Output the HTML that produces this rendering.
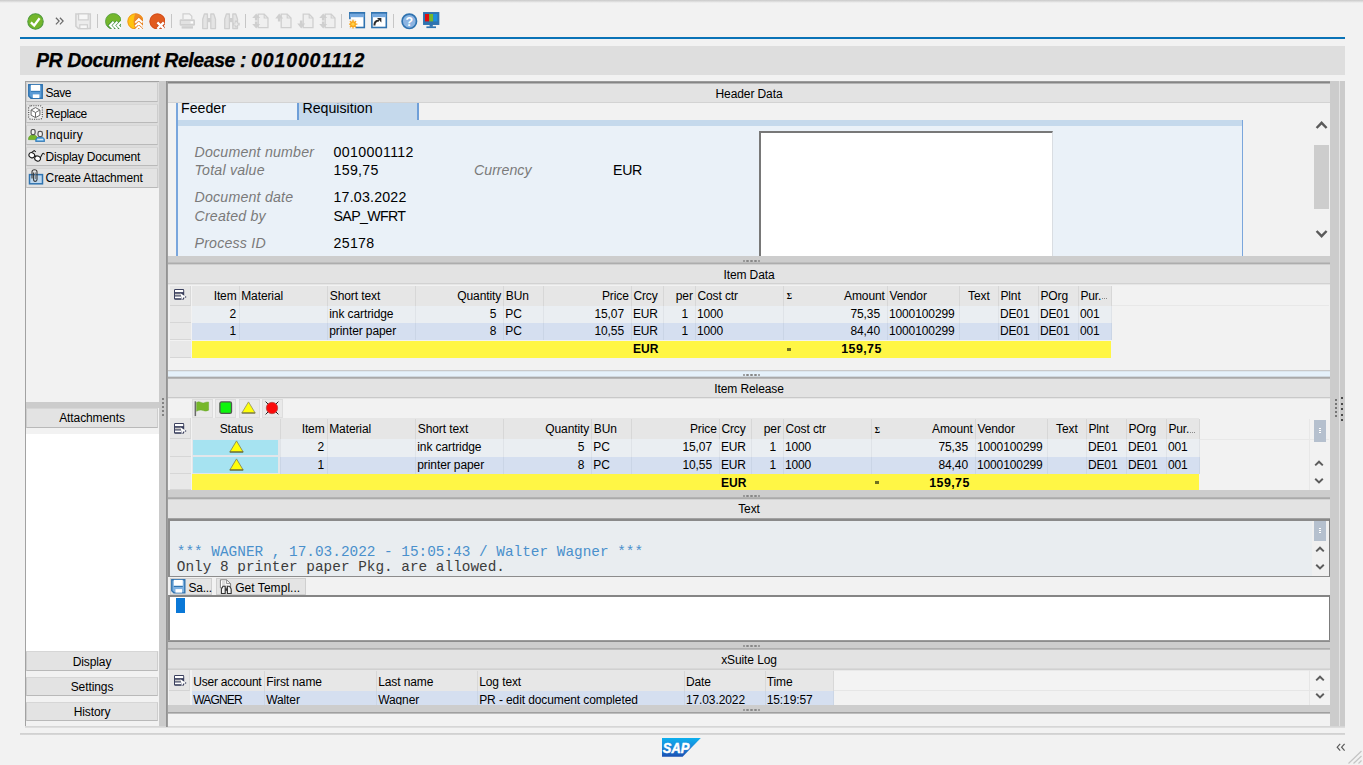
<!DOCTYPE html>
<html lang="en"><head><meta charset="utf-8"><title>PR Document Release : 0010001112</title>
<style>
html,body{margin:0;padding:0;}
body{width:1363px;height:765px;overflow:hidden;background:#f2f2f2;position:relative;
 font-family:"Liberation Sans","DejaVu Sans",sans-serif;font-size:12px;color:#000;}
div,span,svg{position:absolute;box-sizing:border-box;}
.t{white-space:nowrap;line-height:14px;font-size:12px;letter-spacing:-0.1px;}
.h{white-space:nowrap;line-height:16px;font-size:14.2px;}
.hl{white-space:nowrap;line-height:16px;font-size:14.2px;font-style:italic;color:#7a7a7a;}
.m{white-space:pre;line-height:16px;font-size:14.4px;font-family:"Liberation Mono","DejaVu Sans Mono",monospace;}
.b{font-weight:bold;}
</style></head><body>
<div style="left:0px;top:0px;width:1363px;height:3px;background:linear-gradient(#c9c9c9,#f2f2f2);"></div>
<svg style="left:27.2px;top:12.6px" width="17" height="17" viewBox="0 0 17 17"><circle cx="8.5" cy="8.5" r="7.7" fill="#74b62c" stroke="#4f9b3c" stroke-width="1.1"/><path d="M3.9 9.3 L7.2 12.5 L12.6 5.3" fill="none" stroke="#fff" stroke-width="2.3"/></svg>
<svg style="left:55.4px;top:17px" width="9" height="8.4" viewBox="0 0 9 8.4"><path d="M0.9 0.8 L4.1 4.1 L0.9 7.4 M4.9 0.8 L8.1 4.1 L4.9 7.4" fill="none" stroke="#6a6a6a" stroke-width="1.25"/></svg>
<svg style="left:75px;top:13px" width="17" height="17" viewBox="0 0 17 17"><path d="M0.9 0.9 H15.3 V15.6 H3.4 L0.9 13.2 Z" fill="#ececec" stroke="#cfcfcf" stroke-width="1.5"/><rect x="3.6" y="0.9" width="9.6" height="6" fill="#f7f7f7" stroke="#cfcfcf" stroke-width="1.2"/><rect x="4.8" y="11.8" width="7.6" height="3.8" fill="#f7f7f7" stroke="#cfcfcf" stroke-width="1.2"/></svg>
<div style="left:97px;top:14px;width:1px;height:14px;background:#c6c6c6"></div>
<div style="left:171px;top:14px;width:1px;height:14px;background:#c6c6c6"></div>
<div style="left:245px;top:14px;width:1px;height:14px;background:#c6c6c6"></div>
<div style="left:341px;top:14px;width:1px;height:14px;background:#c6c6c6"></div>
<div style="left:393px;top:14px;width:1px;height:14px;background:#c6c6c6"></div>
<svg style="left:104.5px;top:12.8px" width="16.4" height="16.4" viewBox="0 0 16.4 16.4"><circle cx="8.4" cy="8.4" r="7.9" fill="#74b62c" stroke="#4f9b3c" stroke-width="0.8"/><path d="M8.6 8.8 L5 12.4 L8.6 16 M12.4 8.8 L8.8 12.4 L12.4 16 M16.2 8.8 L12.6 12.4 L16.2 16" fill="none" stroke="#3d8a3a" stroke-width="3.6"/><path d="M8.6 8.8 L5 12.4 L8.6 16 M12.4 8.8 L8.8 12.4 L12.4 16 M16.2 8.8 L12.6 12.4 L16.2 16" fill="none" stroke="#fff" stroke-width="2.1"/></svg>
<svg style="left:126.6px;top:12.8px" width="16.4" height="16.4" viewBox="0 0 16.4 16.4"><circle cx="8.4" cy="8.4" r="7.9" fill="#ffc30f"/><path d="M8.4 0.5 A7.9 7.9 0 0 1 16.3 8.4 A7.9 7.9 0 0 1 8.4 16.3 Q4.8 8.4 8.4 0.5 Z" fill="#f08c26"/><circle cx="8.4" cy="8.4" r="7.6" fill="none" stroke="#ef8a24" stroke-width="0.8"/><path d="M8.2 9.6 L11.8 6 L15.4 9.6 M8.2 13.4 L11.8 9.8 L15.4 13.4 M8.2 17.2 L11.8 13.6 L15.4 17.2" fill="none" stroke="#e27b1e" stroke-width="3.4"/><path d="M8.2 9.6 L11.8 6 L15.4 9.6 M8.2 13.4 L11.8 9.8 L15.4 13.4 M8.2 17.2 L11.8 13.6 L15.4 17.2" fill="none" stroke="#fff" stroke-width="1.9"/></svg>
<svg style="left:148.6px;top:12.8px" width="16.4" height="16.4" viewBox="0 0 16.4 16.4"><circle cx="8.4" cy="8.4" r="7.9" fill="#e15b1f"/><circle cx="8.4" cy="8.4" r="7.5" fill="none" stroke="#cf4a1a" stroke-width="0.8"/><path d="M8.4 9.4 L14.8 15.8 M14.8 9.4 L8.4 15.8" fill="none" stroke="#c9471a" stroke-width="3.8"/><path d="M8.4 9.4 L14.8 15.8 M14.8 9.4 L8.4 15.8" fill="none" stroke="#fff" stroke-width="2.4"/></svg>
<svg style="left:179px;top:12.6px" width="17" height="17" viewBox="0 0 17 17"><path d="M4 6 V0.8 H10.4 L12.8 3.2 V6" fill="#f4f4f4" stroke="#cfcfcf" stroke-width="1.2"/><rect x="0.6" y="6.2" width="15.4" height="6.6" rx="1.4" fill="#cfcfcf"/><rect x="2" y="8" width="12.6" height="3" fill="#e2e2e2"/><rect x="2.6" y="13.2" width="11.4" height="2.4" fill="#cfcfcf"/><rect x="11.6" y="8.4" width="2.4" height="2" fill="#fff"/></svg>
<svg style="left:201.6px;top:12.6px" width="17" height="17" viewBox="0 0 17 17"><path d="M0.7 15.6 V6.2 L2.4 1 H5.4 V15.6 Z M8.8 15.6 V1 H11.8 L13.5 6.2 V15.6 Z" fill="#e4e4e4" stroke="#cfcfcf" stroke-width="1.3" stroke-linejoin="round"/><rect x="5.4" y="5" width="3.4" height="4.2" fill="#cfcfcf"/></svg>
<svg style="left:224px;top:12.6px" width="17" height="17" viewBox="0 0 17 17"><path d="M0.7 15.6 V6.2 L2.4 1 H5.4 V15.6 Z M8.8 15.6 V1 H11.8 L13.5 6.2 V15.6 Z" fill="#e4e4e4" stroke="#cfcfcf" stroke-width="1.3" stroke-linejoin="round"/><rect x="5.4" y="5" width="3.4" height="4.2" fill="#cfcfcf"/><path d="M12.2 7.6 V14.6 M8.7 11.1 H15.7" stroke="#cfcfcf" stroke-width="2.6"/><path d="M12.2 9 V13.2 M10.1 11.1 H14.3" stroke="#f0f0f0" stroke-width="0.9"/></svg>
<svg style="left:252.3px;top:12.6px" width="17" height="17" viewBox="0 0 17 17"><path d="M6.2 1.2 H12.2 L16 5 V14.6 H6.2 Z" fill="#efefef" stroke="#cfcfcf" stroke-width="1.3"/><path d="M12.2 1.2 V5 H16" fill="none" stroke="#cfcfcf" stroke-width="1.1"/><path d="M4.2 0.4 L0.2 5 H2.9 V7.6 H5.5 V5 H8.2 Z" fill="#cfcfcf"/><path d="M4.2 15.6 L0.2 11 H2.9 V8.4 H5.5 V11 H8.2 Z" fill="#cfcfcf"/></svg>
<svg style="left:274.6px;top:12.6px" width="17" height="17" viewBox="0 0 17 17"><path d="M6.2 1.2 H12.2 L16 5 V14.6 H6.2 Z" fill="#efefef" stroke="#cfcfcf" stroke-width="1.3"/><path d="M12.2 1.2 V5 H16" fill="none" stroke="#cfcfcf" stroke-width="1.1"/><path d="M4.2 0.4 L0.2 5.4 H2.9 V8.6 H5.5 V5.4 H8.2 Z" fill="#cfcfcf"/></svg>
<svg style="left:296.6px;top:12.6px" width="17" height="17" viewBox="0 0 17 17"><path d="M6.2 1.2 H12.2 L16 5 V14.6 H6.2 Z" fill="#efefef" stroke="#cfcfcf" stroke-width="1.3"/><path d="M12.2 1.2 V5 H16" fill="none" stroke="#cfcfcf" stroke-width="1.1"/><path d="M4.2 15.6 L0.2 10.6 H2.9 V7.4 H5.5 V10.6 H8.2 Z" fill="#cfcfcf"/></svg>
<svg style="left:318.6px;top:12.6px" width="17" height="17" viewBox="0 0 17 17"><path d="M6.2 1.2 H12.2 L16 5 V14.6 H6.2 Z" fill="#efefef" stroke="#cfcfcf" stroke-width="1.3"/><path d="M12.2 1.2 V5 H16" fill="none" stroke="#cfcfcf" stroke-width="1.1"/><path d="M4.2 0.4 L0.2 5 H2.9 V7.6 H5.5 V5 H8.2 Z" fill="#cfcfcf"/><path d="M4.2 15.6 L0.2 11 H2.9 V8.4 H5.5 V11 H8.2 Z" fill="#cfcfcf"/></svg>
<svg style="left:348.6px;top:12.4px" width="17" height="17" viewBox="0 0 17 17"><rect x="0.9" y="0.9" width="14.4" height="14.6" fill="#fff" stroke="#2f73b0" stroke-width="1.6"/><rect x="1" y="1.4" width="14.2" height="3.8" fill="#74a8de"/><rect x="0.1" y="0.1" width="16" height="1.5" fill="#2f73b0"/><rect x="0" y="7.2" width="6.6" height="9.6" fill="#f2f2f2"/><circle cx="4" cy="12.2" r="2.9" fill="#f9a51a"/><path d="M4 7.8 V16.6 M-0.4 12.2 H8.4 M0.9 9.1 L7.1 15.3 M7.1 9.1 L0.9 15.3" stroke="#f9a51a" stroke-width="1.3"/><circle cx="4" cy="12.2" r="1.6" fill="#ffd24a"/></svg>
<svg style="left:370.8px;top:12.4px" width="17" height="17" viewBox="0 0 17 17"><rect x="0.9" y="0.9" width="14.4" height="14.6" fill="#fff" stroke="#2f73b0" stroke-width="1.6"/><rect x="1" y="1.4" width="14.2" height="3.8" fill="#74a8de"/><rect x="0.1" y="0.1" width="16" height="1.5" fill="#2f73b0"/><path d="M3.4 13.6 Q3.4 8.6 8 8.6" fill="none" stroke="#2a2a2a" stroke-width="2"/><path d="M6 6 H10.4 V10.4 Z" fill="#2a2a2a"/></svg>
<svg style="left:400.6px;top:13px" width="17" height="17" viewBox="0 0 17 17"><circle cx="8.3" cy="8.3" r="7.2" fill="#8cb4e1" stroke="#2f73b0" stroke-width="1.7"/><text x="8.3" y="12.7" font-family="Liberation Sans,sans-serif" font-size="12.5" font-weight="bold" fill="#fff" text-anchor="middle">?</text></svg>
<svg style="left:422.8px;top:12.4px" width="17" height="17" viewBox="0 0 17 17"><rect x="0.8" y="0.8" width="14.8" height="11.4" fill="#2f73b0" stroke="#2f73b0" stroke-width="1.5"/><rect x="2" y="2" width="4.2" height="7.4" fill="#e00d0d"/><rect x="6.2" y="2" width="4.1" height="7.4" fill="#76b72a"/><rect x="10.3" y="2" width="4.1" height="7.4" fill="#1c8fdc"/><rect x="6.6" y="12.2" width="3.2" height="2.6" fill="#2f73b0"/><rect x="3.4" y="14.4" width="9.6" height="1.7" fill="#2f73b0"/></svg>
<div style="left:20px;top:37px;width:1325px;height:2px;background:#0a73b7;"></div>
<div style="left:20px;top:46px;width:1325px;height:29px;background:#dedede;"></div>
<span class="t" style="left:36px;top:48px;font-size:19.5px;line-height:24px;font-weight:bold;font-style:italic;-webkit-text-stroke:0.25px #000;"><span style="position:static;letter-spacing:-0.42px">PR Document Release : </span><span style="position:static;letter-spacing:0.86px">0010001112</span></span>
<div style="left:25px;top:81px;width:134px;height:646px;background:#f2f2f2;border-left:1px solid #a2a2a2;border-top:1px solid #a2a2a2;border-bottom:1px solid #d4d4d4;"></div>
<div style="left:26px;top:82px;width:133px;height:106px;background:#dcdcdc;"></div>
<div style="left:26px;top:82px;width:132px;height:19.5px;background:#e3e3e3;border:1px solid #cdcdcd;border-bottom-color:#b9b9b9;border-top-color:#d6d6d6;"></div>
<span class="t" style="left:45.6px;top:85.8px;letter-spacing:-0.5px;">Save</span>
<div style="left:26px;top:103.5px;width:132px;height:19.5px;background:#e3e3e3;border:1px solid #cdcdcd;border-bottom-color:#b9b9b9;border-top-color:#d6d6d6;"></div>
<span class="t" style="left:45.6px;top:106.5px;letter-spacing:-0.4px;">Replace</span>
<div style="left:26px;top:125px;width:132px;height:19.5px;background:#e3e3e3;border:1px solid #cdcdcd;border-bottom-color:#b9b9b9;border-top-color:#d6d6d6;"></div>
<span class="t" style="left:45.6px;top:128px;letter-spacing:0.2px;">Inquiry</span>
<div style="left:26px;top:146.5px;width:132px;height:19.5px;background:#e3e3e3;border:1px solid #cdcdcd;border-bottom-color:#b9b9b9;border-top-color:#d6d6d6;"></div>
<span class="t" style="left:45.6px;top:149.5px;letter-spacing:-0.18px;">Display Document</span>
<div style="left:26px;top:168px;width:132px;height:19.5px;background:#e3e3e3;border:1px solid #cdcdcd;border-bottom-color:#b9b9b9;border-top-color:#d6d6d6;"></div>
<span class="t" style="left:45.6px;top:171px;letter-spacing:-0.13px;">Create Attachment</span>
<svg style="left:28px;top:84px" width="15" height="15" viewBox="0 0 15 15"><path d="M0.8 0.8 H14.2 V14.2 H3 L0.8 12 Z" fill="#5b9bd5" stroke="#2f73b0" stroke-width="1.5" stroke-linejoin="miter"/><rect x="2.9" y="0.9" width="9.2" height="6" fill="#fff"/><path d="M2.9 7.4 H12.1" stroke="#2f73b0" stroke-width="0.9"/><rect x="4.8" y="10.4" width="6.6" height="3.6" fill="#fff"/></svg>
<svg style="left:28px;top:105px" width="15" height="15" viewBox="0 0 15 15"><rect x="0.7" y="0.7" width="13.6" height="13.6" rx="2.4" fill="#f0f0f0" stroke="#444" stroke-width="1.1" stroke-dasharray="1 1.25"/><path d="M7.5 2.6 L11.9 5 V10.2 L7.5 12.6 L3.1 10.2 V5 Z" fill="#fff" stroke="#6a6a6a" stroke-width="1"/><path d="M3.1 5 L7.5 7.5 L11.9 5 M7.5 7.5 V12.6" fill="none" stroke="#6a6a6a" stroke-width="1"/></svg>
<svg style="left:27.6px;top:128.6px" width="17.4" height="13" viewBox="0 0 17.4 13"><path d="M0.5 10.6 Q0.5 6 5 6 Q9.4 6 9.4 10.6 Z" fill="#76b72a" stroke="#5a9c2a" stroke-width="0.7"/><rect x="3.1" y="0.5" width="4" height="5.2" rx="1.7" fill="#f4f4f4" stroke="#555" stroke-width="1.2"/><path d="M7.6 12.5 Q7.6 7.8 12.2 7.8 Q16.8 7.8 16.8 12.5 Z" fill="#4d9fdc" stroke="#2f73b0" stroke-width="0.8"/><rect x="9.2" y="9.8" width="6" height="1.5" fill="#d6e8f7"/><rect x="10" y="2.4" width="4.4" height="5.2" rx="1.8" fill="#f4f4f4" stroke="#555" stroke-width="1.2"/></svg>
<svg style="left:27.6px;top:150px" width="17.4" height="12" viewBox="0 0 17.4 12"><ellipse cx="3.8" cy="5.2" rx="2.9" ry="2.5" transform="rotate(25 3.8 5.2)" fill="#fff" stroke="#1a1a1a" stroke-width="1.1"/><ellipse cx="9.6" cy="8.6" rx="2.9" ry="2.5" transform="rotate(25 9.6 8.6)" fill="#fff" stroke="#1a1a1a" stroke-width="1.1"/><path d="M6.4 5.8 Q7.6 5.4 7.4 7 M12.2 8 L14.6 3.6 Q15.6 2.8 16.6 4.4 M3.4 2.6 L6.2 0.6 L7.8 1.8" fill="none" stroke="#1a1a1a" stroke-width="1.05"/></svg>
<svg style="left:28px;top:169px" width="16" height="16" viewBox="0 0 16 16"><rect x="1.5" y="5.6" width="13" height="9.2" fill="#bdd7ee" stroke="#2f73b0" stroke-width="1.5"/><path d="M4 9.6 V2.8 Q4 0.8 6.5 0.8 Q9 0.8 9 2.8 V10.6 Q9 12.4 7.2 12.4 Q5.6 12.4 5.6 10.6 V3.6" fill="none" stroke="#3a3a3a" stroke-width="1.1"/><path d="M7.4 3.4 V10" fill="none" stroke="#777" stroke-width="0.9"/></svg>
<div style="left:26px;top:401.5px;width:133px;height:6px;background:#cccccc;"></div>
<div style="left:26px;top:407.5px;width:132px;height:20px;background:#e3e3e3;border:1px solid #cdcdcd;border-bottom-color:#b9b9b9;border-top-color:#d6d6d6;"></div>
<span class="t" style="left:25px;top:410.5px;width:134px;text-align:center;">Attachments</span>
<div style="left:26px;top:434px;width:133px;height:217px;background:#fff;"></div>
<div style="left:26px;top:651px;width:132px;height:19.5px;background:#e3e3e3;border:1px solid #cdcdcd;border-bottom-color:#b9b9b9;border-top-color:#d6d6d6;"></div>
<span class="t" style="left:25px;top:654.5px;width:134px;text-align:center;">Display</span>
<div style="left:26px;top:676.5px;width:132px;height:19.5px;background:#e3e3e3;border:1px solid #cdcdcd;border-bottom-color:#b9b9b9;border-top-color:#d6d6d6;"></div>
<span class="t" style="left:25px;top:680.0px;width:134px;text-align:center;">Settings</span>
<div style="left:26px;top:701.5px;width:132px;height:19.5px;background:#e3e3e3;border:1px solid #cdcdcd;border-bottom-color:#b9b9b9;border-top-color:#d6d6d6;"></div>
<span class="t" style="left:25px;top:705.0px;width:134px;text-align:center;">History</span>
<div style="left:159px;top:81px;width:7px;height:646px;background:#cbcbcb;"></div>
<div style="left:162px;top:398.0px;width:2px;height:2px;background:#6a6a6a;border-radius:1px;"></div>
<div style="left:162px;top:402.1px;width:2px;height:2px;background:#6a6a6a;border-radius:1px;"></div>
<div style="left:162px;top:406.2px;width:2px;height:2px;background:#6a6a6a;border-radius:1px;"></div>
<div style="left:162px;top:410.3px;width:2px;height:2px;background:#6a6a6a;border-radius:1px;"></div>
<div style="left:162px;top:414.4px;width:2px;height:2px;background:#6a6a6a;border-radius:1px;"></div>
<div style="left:1330px;top:81px;width:9px;height:646px;background:#cccccc;"></div>
<div style="left:1339px;top:81px;width:1px;height:646px;background:#e2e2e2;"></div>
<div style="left:1340px;top:81px;width:5px;height:646px;background:#cbcbcb;"></div>
<div style="left:1335px;top:398.5px;width:2px;height:2px;background:#5a5a5a;border-radius:1px;"></div>
<div style="left:1341px;top:397.2px;width:2px;height:2px;background:#4a4a4a;"></div>
<div style="left:1335px;top:402.6px;width:2px;height:2px;background:#5a5a5a;border-radius:1px;"></div>
<div style="left:1341px;top:402.7px;width:2px;height:2px;background:#4a4a4a;"></div>
<div style="left:1335px;top:406.7px;width:2px;height:2px;background:#5a5a5a;border-radius:1px;"></div>
<div style="left:1341px;top:408.2px;width:2px;height:2px;background:#4a4a4a;"></div>
<div style="left:1335px;top:410.8px;width:2px;height:2px;background:#5a5a5a;border-radius:1px;"></div>
<div style="left:1341px;top:413.7px;width:2px;height:2px;background:#4a4a4a;"></div>
<div style="left:1335px;top:414.9px;width:2px;height:2px;background:#5a5a5a;border-radius:1px;"></div>
<div style="left:1341px;top:419.2px;width:2px;height:2px;background:#4a4a4a;"></div>
<div style="left:166px;top:81px;width:1164px;height:1px;background:#9a9a9a;"></div>
<div style="left:166px;top:82px;width:1164px;height:1px;background:#858585;"></div>
<div style="left:166px;top:83px;width:1164px;height:1px;background:#b4b4b4;"></div>
<div style="left:167px;top:84px;width:1163px;height:18px;background:#e3e3e3;"></div>
<span class="t" style="left:167px;top:86.7px;width:1164px;text-align:center;">Header Data</span>
<div style="left:176px;top:103px;width:1067px;height:23px;background:#c5d9ec;"></div>
<div style="left:178px;top:103px;width:119px;height:17px;background:#eaf1f8;"></div>
<div style="left:419px;top:103px;width:824px;height:17px;background:#f2f2f2;"></div>
<div style="left:178px;top:126px;width:1064px;height:130px;background:#eaf1f8;"></div>
<div style="left:176px;top:103px;width:2px;height:153px;background:#7aa6dc;"></div>
<div style="left:297px;top:103px;width:1.5px;height:17px;background:#6f9fd8;"></div>
<div style="left:417.4px;top:103px;width:1.6px;height:17px;background:#6f9fd8;"></div>
<div style="left:1241.5px;top:120px;width:1.5px;height:136px;background:#7aa6dc;"></div>
<span class="h" style="left:181px;top:100px;">Feeder</span>
<span class="h" style="left:302.4px;top:100px;">Requisition</span>
<div style="left:166px;top:102px;width:1164px;height:1px;background:#d3d3d3;"></div>
<span class="hl" style="left:194.5px;top:143.5px;letter-spacing:0.2px;">Document number</span>
<span class="h" style="left:333.5px;top:143.5px;letter-spacing:0.35px;">0010001112</span>
<span class="hl" style="left:194.5px;top:161.5px;letter-spacing:0.2px;">Total value</span>
<span class="h" style="left:333.5px;top:161.5px;letter-spacing:0.3px;">159,75</span>
<span class="hl" style="left:194.5px;top:189.1px;letter-spacing:0.2px;">Document date</span>
<span class="h" style="left:333.5px;top:189.1px;letter-spacing:0.2px;">17.03.2022</span>
<span class="hl" style="left:194.5px;top:207.7px;letter-spacing:0.2px;">Created by</span>
<span class="h" style="left:333.5px;top:207.7px;letter-spacing:-0.65px;">SAP_WFRT</span>
<span class="hl" style="left:194.5px;top:234.7px;letter-spacing:0.2px;">Process ID</span>
<span class="h" style="left:333.5px;top:234.7px;letter-spacing:0.3px;">25178</span>
<span class="hl" style="left:474px;top:161.5px;">Currency</span>
<span class="h" style="left:613px;top:161.5px;letter-spacing:-0.3px;">EUR</span>
<div style="left:759px;top:130.5px;width:294px;height:125.5px;background:#fff;border-top:2px solid #787878;border-left:2px solid #787878;border-right:1px solid #d9dde2;"></div>
<div style="left:1314.2px;top:145.2px;width:14.8px;height:63.6px;background:#cdcdcd;"></div>
<svg style="left:1314px;top:120px" width="15" height="10" viewBox="0 0 15 10"><path d="M2.6 8 L7.6 2.8 L12.6 8" fill="none" stroke="#5a5a5a" stroke-width="2.4"/></svg>
<svg style="left:1314px;top:229px" width="15" height="10" viewBox="0 0 15 10"><path d="M2.6 2 L7.6 7.2 L12.6 2" fill="none" stroke="#5a5a5a" stroke-width="2.4"/></svg>
<div style="left:166px;top:256px;width:1164px;height:1px;background:#cdcdcd;"></div>
<div style="left:166px;top:257px;width:1164px;height:1px;background:#cdcdcd;"></div>
<div style="left:166px;top:258px;width:1164px;height:1px;background:#cdcdcd;"></div>
<div style="left:166px;top:259px;width:1164px;height:1px;background:#cdcdcd;"></div>
<div style="left:166px;top:260px;width:1164px;height:1px;background:#cdcdcd;"></div>
<div style="left:166px;top:261px;width:1164px;height:1px;background:#cdcdcd;"></div>
<div style="left:166px;top:262px;width:1164px;height:1px;background:#bdbdbd;"></div>
<div style="left:166px;top:263px;width:1164px;height:1px;background:#adadad;"></div>
<div style="left:166px;top:264px;width:1164px;height:1px;background:#cfcfcf;"></div>
<div style="left:742.5px;top:259.5px;width:2.2px;height:2.2px;background:#888888;border-radius:1.1px;"></div>
<div style="left:746.45px;top:259.5px;width:2.2px;height:2.2px;background:#888888;border-radius:1.1px;"></div>
<div style="left:750.4px;top:259.5px;width:2.2px;height:2.2px;background:#888888;border-radius:1.1px;"></div>
<div style="left:754.35px;top:259.5px;width:2.2px;height:2.2px;background:#888888;border-radius:1.1px;"></div>
<div style="left:758.3px;top:259.5px;width:2.2px;height:2.2px;background:#888888;border-radius:1.1px;"></div>
<div style="left:167px;top:265px;width:1163px;height:18px;background:#e3e3e3;"></div>
<span class="t" style="left:167px;top:267.5px;width:1164px;text-align:center;">Item Data</span>
<div style="left:166px;top:283px;width:1164px;height:1px;background:#d2d2d2;"></div>
<div style="left:166px;top:284px;width:1164px;height:1px;background:#e6e6e6;"></div>
<div style="left:169.5px;top:285.6px;width:21.3px;height:20.099999999999966px;background:#e6e6e6;border-bottom:1px solid #d3d3d3;border-right:1px solid #d9d9d9;"></div>
<svg style="left:174.1px;top:289.4px" width="13" height="12" viewBox="0 0 13 12"><rect x="0.6" y="0.6" width="9" height="9.6" rx="0.8" fill="#3b405e" stroke="#3b405e" stroke-width="1.2"/><rect x="1" y="1" width="8.2" height="2.1" fill="#fff"/><rect x="1" y="4.7" width="6" height="1.7" fill="#c9c9c9"/><rect x="1" y="7.5" width="6" height="1.7" fill="#fff"/><path d="M6.6 4.2 L12 8 L9.3 8.6 L7.8 11.4 Z" fill="#fff"/><circle cx="11.6" cy="8" r="0.7" fill="#3b405e"/></svg>
<div style="left:169.5px;top:305.7px;width:21.3px;height:17.100000000000023px;background:#e8e8e8;border-bottom:1px solid #d6d6d6;"></div>
<div style="left:169.5px;top:322.8px;width:21.3px;height:17.69999999999999px;background:#e8e8e8;border-bottom:1px solid #d6d6d6;"></div>
<div style="left:169.5px;top:340.5px;width:21.3px;height:17.0px;background:#e8e8e8;border-bottom:1px solid #d6d6d6;"></div>
<div style="left:1111.4px;top:305.3px;width:217.5999999999999px;height:1px;background:#e8e8e8;"></div>
<div style="left:192.4px;top:285.6px;width:919.0000000000001px;height:20.099999999999966px;background:#e6e6e6;"></div>
<div style="left:192.4px;top:305.7px;width:919.0000000000001px;height:17.100000000000023px;background:#eaeef2;"></div>
<div style="left:192.4px;top:322.8px;width:919.0000000000001px;height:17.69999999999999px;background:#d5dff0;"></div>
<div style="left:192.4px;top:340.5px;width:919.0000000000001px;height:17.0px;background:#fff645;"></div>
<div style="left:238.7px;top:286.1px;width:1px;height:19.599999999999966px;background:#d7d7d7;"></div>
<div style="left:238.7px;top:305.7px;width:1px;height:17.100000000000023px;background:#dfe3e8;"></div>
<div style="left:238.7px;top:322.8px;width:1px;height:17.69999999999999px;background:#cad5e6;"></div>
<span class="t" style="right:1126.4px;top:288.7px;letter-spacing:-0.1px;">Item</span>
<span class="t" style="right:1127.0px;top:306.75px;letter-spacing:-0.1px;">2</span>
<span class="t" style="right:1127.0px;top:323.85px;letter-spacing:-0.1px;">1</span>
<div style="left:327.29999999999995px;top:286.1px;width:1px;height:19.599999999999966px;background:#d7d7d7;"></div>
<div style="left:327.29999999999995px;top:305.7px;width:1px;height:17.100000000000023px;background:#dfe3e8;"></div>
<div style="left:327.29999999999995px;top:322.8px;width:1px;height:17.69999999999999px;background:#cad5e6;"></div>
<span class="t" style="left:241.2px;top:288.7px;letter-spacing:-0.1px;">Material</span>
<div style="left:415.29999999999995px;top:286.1px;width:1px;height:19.599999999999966px;background:#d7d7d7;"></div>
<div style="left:415.29999999999995px;top:305.7px;width:1px;height:17.100000000000023px;background:#dfe3e8;"></div>
<div style="left:415.29999999999995px;top:322.8px;width:1px;height:17.69999999999999px;background:#cad5e6;"></div>
<span class="t" style="left:329.79999999999995px;top:288.7px;letter-spacing:-0.1px;">Short text</span>
<span class="t" style="left:329.29999999999995px;top:306.75px;letter-spacing:-0.1px;">ink cartridge</span>
<span class="t" style="left:329.29999999999995px;top:323.85px;letter-spacing:-0.1px;">printer paper</span>
<div style="left:503.29999999999995px;top:286.1px;width:1px;height:19.599999999999966px;background:#d7d7d7;"></div>
<div style="left:503.29999999999995px;top:305.7px;width:1px;height:17.100000000000023px;background:#dfe3e8;"></div>
<div style="left:503.29999999999995px;top:322.8px;width:1px;height:17.69999999999999px;background:#cad5e6;"></div>
<span class="t" style="right:861.8000000000001px;top:288.7px;letter-spacing:-0.1px;">Quantity</span>
<span class="t" style="right:866.6px;top:306.75px;letter-spacing:-0.1px;">5</span>
<span class="t" style="right:866.6px;top:323.85px;letter-spacing:-0.1px;">8</span>
<div style="left:542.9px;top:286.1px;width:1px;height:19.599999999999966px;background:#d7d7d7;"></div>
<div style="left:542.9px;top:305.7px;width:1px;height:17.100000000000023px;background:#dfe3e8;"></div>
<div style="left:542.9px;top:322.8px;width:1px;height:17.69999999999999px;background:#cad5e6;"></div>
<span class="t" style="left:505.79999999999995px;top:288.7px;letter-spacing:-0.1px;">BUn</span>
<span class="t" style="left:505.29999999999995px;top:306.75px;letter-spacing:-0.1px;">PC</span>
<span class="t" style="left:505.29999999999995px;top:323.85px;letter-spacing:-0.1px;">PC</span>
<div style="left:630.9px;top:286.1px;width:1px;height:19.599999999999966px;background:#d7d7d7;"></div>
<div style="left:630.9px;top:305.7px;width:1px;height:17.100000000000023px;background:#dfe3e8;"></div>
<div style="left:630.9px;top:322.8px;width:1px;height:17.69999999999999px;background:#cad5e6;"></div>
<span class="t" style="right:734.2px;top:288.7px;letter-spacing:-0.1px;">Price</span>
<span class="t" style="right:739.0px;top:306.75px;letter-spacing:-0.1px;">15,07</span>
<span class="t" style="right:739.0px;top:323.85px;letter-spacing:-0.1px;">10,55</span>
<div style="left:663.4px;top:286.1px;width:1px;height:19.599999999999966px;background:#d7d7d7;"></div>
<div style="left:663.4px;top:305.7px;width:1px;height:17.100000000000023px;background:#dfe3e8;"></div>
<div style="left:663.4px;top:322.8px;width:1px;height:17.69999999999999px;background:#cad5e6;"></div>
<span class="t" style="left:633.4px;top:288.7px;letter-spacing:-0.1px;">Crcy</span>
<span class="t" style="left:632.9px;top:306.75px;letter-spacing:-0.1px;">EUR</span>
<span class="t" style="left:632.9px;top:323.85px;letter-spacing:-0.1px;">EUR</span>
<span class="t b" style="left:633.0px;top:342.1px;letter-spacing:0.1px;">EUR</span>
<div style="left:694.9px;top:286.1px;width:1px;height:19.599999999999966px;background:#d7d7d7;"></div>
<div style="left:694.9px;top:305.7px;width:1px;height:17.100000000000023px;background:#dfe3e8;"></div>
<div style="left:694.9px;top:322.8px;width:1px;height:17.69999999999999px;background:#cad5e6;"></div>
<span class="t" style="right:670.2px;top:288.7px;letter-spacing:-0.1px;">per</span>
<span class="t" style="right:675.0px;top:306.75px;letter-spacing:-0.1px;">1</span>
<span class="t" style="right:675.0px;top:323.85px;letter-spacing:-0.1px;">1</span>
<div style="left:783.3px;top:286.1px;width:1px;height:19.599999999999966px;background:#d7d7d7;"></div>
<div style="left:783.3px;top:305.7px;width:1px;height:17.100000000000023px;background:#dfe3e8;"></div>
<div style="left:783.3px;top:322.8px;width:1px;height:17.69999999999999px;background:#cad5e6;"></div>
<span class="t" style="left:697.4px;top:288.7px;letter-spacing:-0.1px;">Cost ctr</span>
<span class="t" style="left:696.9px;top:306.75px;letter-spacing:-0.1px;">1000</span>
<span class="t" style="left:696.9px;top:323.85px;letter-spacing:-0.1px;">1000</span>
<span class="t" style="left:786.8px;top:291.9px;font-family:'Liberation Serif',serif;font-size:8px;font-weight:bold;line-height:10px;">Σ</span>
<div style="left:787.1999999999999px;top:347.5px;width:3.4px;height:3.4px;background:#707020;"></div>
<div style="left:886.9px;top:286.1px;width:1px;height:19.599999999999966px;background:#d7d7d7;"></div>
<div style="left:886.9px;top:305.7px;width:1px;height:17.100000000000023px;background:#dfe3e8;"></div>
<div style="left:886.9px;top:322.8px;width:1px;height:17.69999999999999px;background:#cad5e6;"></div>
<span class="t" style="right:478.20000000000005px;top:288.7px;letter-spacing:-0.1px;">Amount</span>
<span class="t" style="right:483.0px;top:306.75px;letter-spacing:-0.1px;">75,35</span>
<span class="t" style="right:483.0px;top:323.85px;letter-spacing:-0.1px;">84,40</span>
<span class="t b" style="right:481.20000000000005px;top:342.1px;letter-spacing:0.45px;font-size:12.4px;">159,75</span>
<div style="left:958.9px;top:286.1px;width:1px;height:19.599999999999966px;background:#d7d7d7;"></div>
<div style="left:958.9px;top:305.7px;width:1px;height:17.100000000000023px;background:#dfe3e8;"></div>
<div style="left:958.9px;top:322.8px;width:1px;height:17.69999999999999px;background:#cad5e6;"></div>
<span class="t" style="left:889.4px;top:288.7px;letter-spacing:-0.1px;">Vendor</span>
<span class="t" style="left:888.9px;top:306.75px;letter-spacing:-0.1px;">1000100299</span>
<span class="t" style="left:888.9px;top:323.85px;letter-spacing:-0.1px;">1000100299</span>
<div style="left:997.9px;top:286.1px;width:1px;height:19.599999999999966px;background:#d7d7d7;"></div>
<div style="left:997.9px;top:305.7px;width:1px;height:17.100000000000023px;background:#dfe3e8;"></div>
<div style="left:997.9px;top:322.8px;width:1px;height:17.69999999999999px;background:#cad5e6;"></div>
<span class="t" style="left:959.4px;top:288.7px;width:39px;text-align:center;letter-spacing:-0.1px;">Text</span>
<div style="left:1037.9px;top:286.1px;width:1px;height:19.599999999999966px;background:#d7d7d7;"></div>
<div style="left:1037.9px;top:305.7px;width:1px;height:17.100000000000023px;background:#dfe3e8;"></div>
<div style="left:1037.9px;top:322.8px;width:1px;height:17.69999999999999px;background:#cad5e6;"></div>
<span class="t" style="left:1000.4px;top:288.7px;letter-spacing:-0.1px;">Plnt</span>
<span class="t" style="left:999.9px;top:306.75px;letter-spacing:-0.1px;">DE01</span>
<span class="t" style="left:999.9px;top:323.85px;letter-spacing:-0.1px;">DE01</span>
<div style="left:1077.9px;top:286.1px;width:1px;height:19.599999999999966px;background:#d7d7d7;"></div>
<div style="left:1077.9px;top:305.7px;width:1px;height:17.100000000000023px;background:#dfe3e8;"></div>
<div style="left:1077.9px;top:322.8px;width:1px;height:17.69999999999999px;background:#cad5e6;"></div>
<span class="t" style="left:1040.4px;top:288.7px;letter-spacing:-0.1px;">POrg</span>
<span class="t" style="left:1039.9px;top:306.75px;letter-spacing:-0.1px;">DE01</span>
<span class="t" style="left:1039.9px;top:323.85px;letter-spacing:-0.1px;">DE01</span>
<div style="left:1110.9px;top:286.1px;width:1px;height:19.599999999999966px;background:#d7d7d7;"></div>
<div style="left:1110.9px;top:305.7px;width:1px;height:17.100000000000023px;background:#dfe3e8;"></div>
<div style="left:1110.9px;top:322.8px;width:1px;height:17.69999999999999px;background:#cad5e6;"></div>
<span class="t" style="left:1080.4px;top:288.7px;letter-spacing:-0.1px;">Pur.</span>
<div style="left:1101.9px;top:298.3px;width:1px;height:1px;background:#8a8a8a;"></div>
<div style="left:1104.1000000000001px;top:298.3px;width:1px;height:1px;background:#8a8a8a;"></div>
<div style="left:1106.3000000000002px;top:298.3px;width:1px;height:1px;background:#8a8a8a;"></div>
<span class="t" style="left:1079.9px;top:306.75px;letter-spacing:-0.1px;">001</span>
<span class="t" style="left:1079.9px;top:323.85px;letter-spacing:-0.1px;">001</span>
<div style="left:742.5px;top:373.7px;width:2.2px;height:2.2px;background:#888888;border-radius:1.1px;"></div>
<div style="left:746.45px;top:373.7px;width:2.2px;height:2.2px;background:#888888;border-radius:1.1px;"></div>
<div style="left:750.4px;top:373.7px;width:2.2px;height:2.2px;background:#888888;border-radius:1.1px;"></div>
<div style="left:754.35px;top:373.7px;width:2.2px;height:2.2px;background:#888888;border-radius:1.1px;"></div>
<div style="left:758.3px;top:373.7px;width:2.2px;height:2.2px;background:#888888;border-radius:1.1px;"></div>
<div style="left:166px;top:370px;width:1164px;height:1px;background:#c9c9c9;"></div>
<div style="left:166px;top:371px;width:1164px;height:1px;background:#dbe6ee;"></div>
<div style="left:166px;top:372px;width:1164px;height:1px;background:#e5f1fa;"></div>
<div style="left:166px;top:373px;width:1164px;height:1px;background:#e5f1fa;"></div>
<div style="left:166px;top:374px;width:1164px;height:1px;background:#e5f1fa;"></div>
<div style="left:166px;top:375px;width:1164px;height:1px;background:#e5f1fa;"></div>
<div style="left:166px;top:376px;width:1164px;height:1px;background:#d0d8de;"></div>
<div style="left:166px;top:377px;width:1164px;height:1px;background:#a9a9a9;"></div>
<div style="left:166px;top:378px;width:1164px;height:1px;background:#b8b8b8;"></div>
<div style="left:742.5px;top:373.7px;width:2.2px;height:2.2px;background:#888888;border-radius:1.1px;"></div>
<div style="left:746.45px;top:373.7px;width:2.2px;height:2.2px;background:#888888;border-radius:1.1px;"></div>
<div style="left:750.4px;top:373.7px;width:2.2px;height:2.2px;background:#888888;border-radius:1.1px;"></div>
<div style="left:754.35px;top:373.7px;width:2.2px;height:2.2px;background:#888888;border-radius:1.1px;"></div>
<div style="left:758.3px;top:373.7px;width:2.2px;height:2.2px;background:#888888;border-radius:1.1px;"></div>
<div style="left:167px;top:379px;width:1163px;height:18px;background:#e3e3e3;"></div>
<span class="t" style="left:167px;top:381.5px;width:1164px;text-align:center;">Item Release</span>
<div style="left:166px;top:397px;width:1164px;height:1px;background:#c9c9c9;"></div>
<div style="left:166px;top:398px;width:1164px;height:1px;background:#e6e6e6;"></div>
<div style="left:191.8px;top:399.2px;width:21px;height:18.4px;background:#e9e9e9;border:1px solid #dddddd"></div>
<div style="left:215.2px;top:399.2px;width:21px;height:18.4px;background:#e9e9e9;border:1px solid #dddddd"></div>
<div style="left:238.6px;top:399.2px;width:21px;height:18.4px;background:#e9e9e9;border:1px solid #dddddd"></div>
<div style="left:262.0px;top:399.2px;width:21px;height:18.4px;background:#e9e9e9;border:1px solid #dddddd"></div>
<svg style="left:193.8px;top:400.7px" width="17" height="16" viewBox="0 0 17 16"><rect x="0.6" y="0.3" width="1.5" height="14.8" fill="#6a6a6a"/><path d="M2.6 1.4 Q4.6 0.2 7 1.4 Q9.4 2.7 12 1.2 L14.6 1 V9.2 Q11.8 10.8 9.4 9.6 Q7 8.4 4.8 9.3 L2.6 10.2 Z" fill="#76b72a" stroke="#69a92c" stroke-width="0.5"/></svg>
<svg style="left:218.8px;top:401.09999999999997px" width="14" height="14" viewBox="0 0 14 14"><rect x="0.9" y="0.9" width="11.6" height="11.4" rx="1.6" fill="#0cf50c" stroke="#50564e" stroke-width="1.3"/></svg>
<svg style="left:241.20000000000002px;top:401.0px" width="15" height="13" viewBox="0 0 15 13"><path d="M7.5 0.9 L14.2 12 H0.8 Z" fill="#ffff0a" stroke="#9a9a60" stroke-width="0.9" stroke-linejoin="round"/><path d="M0.8 12 H14.2" stroke="#66663a" stroke-width="1"/></svg>
<svg style="left:264.0px;top:399.8px" width="16" height="16" viewBox="0 0 16 16"><path d="M1.6 1.6 L4 4 M14.4 1.6 L12 4 M1.6 14.4 L4 12 M14.4 14.4 L12 12" stroke="#222" stroke-width="1"/><circle cx="8" cy="8" r="5.7" fill="#fb0a0a" stroke="#b04040" stroke-width="0.7"/></svg>
<div style="left:169.5px;top:418.4px;width:21.3px;height:20.900000000000034px;background:#e6e6e6;border-bottom:1px solid #d3d3d3;border-right:1px solid #d9d9d9;"></div>
<svg style="left:174.1px;top:423.0px" width="13" height="12" viewBox="0 0 13 12"><rect x="0.6" y="0.6" width="9" height="9.6" rx="0.8" fill="#3b405e" stroke="#3b405e" stroke-width="1.2"/><rect x="1" y="1" width="8.2" height="2.1" fill="#fff"/><rect x="1" y="4.7" width="6" height="1.7" fill="#c9c9c9"/><rect x="1" y="7.5" width="6" height="1.7" fill="#fff"/><path d="M6.6 4.2 L12 8 L9.3 8.6 L7.8 11.4 Z" fill="#fff"/><circle cx="11.6" cy="8" r="0.7" fill="#3b405e"/></svg>
<div style="left:169.5px;top:439.3px;width:21.3px;height:17.30000000000001px;background:#e8e8e8;border-bottom:1px solid #d6d6d6;"></div>
<div style="left:169.5px;top:456.6px;width:21.3px;height:17.399999999999977px;background:#e8e8e8;border-bottom:1px solid #d6d6d6;"></div>
<div style="left:169.5px;top:474px;width:21.3px;height:16.30000000000001px;background:#e8e8e8;border-bottom:1px solid #d6d6d6;"></div>
<div style="left:1199.4px;top:438.90000000000003px;width:129.5999999999999px;height:1px;background:#e8e8e8;"></div>
<div style="left:192.4px;top:418.4px;width:1007.0000000000001px;height:20.900000000000034px;background:#e6e6e6;"></div>
<div style="left:192.4px;top:439.3px;width:1007.0000000000001px;height:17.30000000000001px;background:#eaeef2;"></div>
<div style="left:192.4px;top:456.6px;width:1007.0000000000001px;height:17.399999999999977px;background:#d5dff0;"></div>
<div style="left:192.4px;top:474px;width:1007.0000000000001px;height:16.30000000000001px;background:#fff645;"></div>
<div style="left:279.9px;top:418.9px;width:1px;height:20.400000000000034px;background:#d7d7d7;"></div>
<div style="left:279.9px;top:439.3px;width:1px;height:17.30000000000001px;background:#dfe3e8;"></div>
<div style="left:279.9px;top:456.6px;width:1px;height:17.399999999999977px;background:#cad5e6;"></div>
<span class="t" style="left:192.4px;top:422.3px;width:88px;text-align:center;letter-spacing:-0.1px;">Status</span>
<div style="left:192.4px;top:439.3px;width:87.4px;height:17.30000000000001px;background:#e2e6ea;"></div>
<div style="left:192.9px;top:440.0px;width:85.4px;height:15.200000000000012px;background:#a6e3f1;"></div>
<svg style="left:229.10000000000002px;top:440.40000000000003px" width="15" height="13" viewBox="0 0 15 13"><path d="M7.5 0.9 L14.2 12 H0.8 Z" fill="#ffff0a" stroke="#8a8a50" stroke-width="0.9" stroke-linejoin="round"/><path d="M0.8 12 H14.2" stroke="#55552a" stroke-width="1"/></svg>
<div style="left:192.4px;top:456.6px;width:87.4px;height:17.399999999999977px;background:#e2e6ea;"></div>
<div style="left:192.9px;top:457.3px;width:85.4px;height:15.299999999999978px;background:#a6e3f1;"></div>
<svg style="left:229.10000000000002px;top:457.70000000000005px" width="15" height="13" viewBox="0 0 15 13"><path d="M7.5 0.9 L14.2 12 H0.8 Z" fill="#ffff0a" stroke="#8a8a50" stroke-width="0.9" stroke-linejoin="round"/><path d="M0.8 12 H14.2" stroke="#55552a" stroke-width="1"/></svg>
<div style="left:326.7px;top:418.9px;width:1px;height:20.400000000000034px;background:#d7d7d7;"></div>
<div style="left:326.7px;top:439.3px;width:1px;height:17.30000000000001px;background:#dfe3e8;"></div>
<div style="left:326.7px;top:456.6px;width:1px;height:17.399999999999977px;background:#cad5e6;"></div>
<span class="t" style="right:1038.4px;top:422.3px;letter-spacing:-0.1px;">Item</span>
<span class="t" style="right:1039.0px;top:440.35px;letter-spacing:-0.1px;">2</span>
<span class="t" style="right:1039.0px;top:457.65000000000003px;letter-spacing:-0.1px;">1</span>
<div style="left:415.29999999999995px;top:418.9px;width:1px;height:20.400000000000034px;background:#d7d7d7;"></div>
<div style="left:415.29999999999995px;top:439.3px;width:1px;height:17.30000000000001px;background:#dfe3e8;"></div>
<div style="left:415.29999999999995px;top:456.6px;width:1px;height:17.399999999999977px;background:#cad5e6;"></div>
<span class="t" style="left:329.2px;top:422.3px;letter-spacing:-0.1px;">Material</span>
<div style="left:503.29999999999995px;top:418.9px;width:1px;height:20.400000000000034px;background:#d7d7d7;"></div>
<div style="left:503.29999999999995px;top:439.3px;width:1px;height:17.30000000000001px;background:#dfe3e8;"></div>
<div style="left:503.29999999999995px;top:456.6px;width:1px;height:17.399999999999977px;background:#cad5e6;"></div>
<span class="t" style="left:417.79999999999995px;top:422.3px;letter-spacing:-0.1px;">Short text</span>
<span class="t" style="left:417.29999999999995px;top:440.35px;letter-spacing:-0.1px;">ink cartridge</span>
<span class="t" style="left:417.29999999999995px;top:457.65000000000003px;letter-spacing:-0.1px;">printer paper</span>
<div style="left:591.3px;top:418.9px;width:1px;height:20.400000000000034px;background:#d7d7d7;"></div>
<div style="left:591.3px;top:439.3px;width:1px;height:17.30000000000001px;background:#dfe3e8;"></div>
<div style="left:591.3px;top:456.6px;width:1px;height:17.399999999999977px;background:#cad5e6;"></div>
<span class="t" style="right:773.8000000000001px;top:422.3px;letter-spacing:-0.1px;">Quantity</span>
<span class="t" style="right:778.6px;top:440.35px;letter-spacing:-0.1px;">5</span>
<span class="t" style="right:778.6px;top:457.65000000000003px;letter-spacing:-0.1px;">8</span>
<div style="left:630.9px;top:418.9px;width:1px;height:20.400000000000034px;background:#d7d7d7;"></div>
<div style="left:630.9px;top:439.3px;width:1px;height:17.30000000000001px;background:#dfe3e8;"></div>
<div style="left:630.9px;top:456.6px;width:1px;height:17.399999999999977px;background:#cad5e6;"></div>
<span class="t" style="left:593.8px;top:422.3px;letter-spacing:-0.1px;">BUn</span>
<span class="t" style="left:593.3px;top:440.35px;letter-spacing:-0.1px;">PC</span>
<span class="t" style="left:593.3px;top:457.65000000000003px;letter-spacing:-0.1px;">PC</span>
<div style="left:718.9px;top:418.9px;width:1px;height:20.400000000000034px;background:#d7d7d7;"></div>
<div style="left:718.9px;top:439.3px;width:1px;height:17.30000000000001px;background:#dfe3e8;"></div>
<div style="left:718.9px;top:456.6px;width:1px;height:17.399999999999977px;background:#cad5e6;"></div>
<span class="t" style="right:646.2px;top:422.3px;letter-spacing:-0.1px;">Price</span>
<span class="t" style="right:651.0px;top:440.35px;letter-spacing:-0.1px;">15,07</span>
<span class="t" style="right:651.0px;top:457.65000000000003px;letter-spacing:-0.1px;">10,55</span>
<div style="left:751.4px;top:418.9px;width:1px;height:20.400000000000034px;background:#d7d7d7;"></div>
<div style="left:751.4px;top:439.3px;width:1px;height:17.30000000000001px;background:#dfe3e8;"></div>
<div style="left:751.4px;top:456.6px;width:1px;height:17.399999999999977px;background:#cad5e6;"></div>
<span class="t" style="left:721.4px;top:422.3px;letter-spacing:-0.1px;">Crcy</span>
<span class="t" style="left:720.9px;top:440.35px;letter-spacing:-0.1px;">EUR</span>
<span class="t" style="left:720.9px;top:457.65000000000003px;letter-spacing:-0.1px;">EUR</span>
<span class="t b" style="left:721.0px;top:475.6px;letter-spacing:0.1px;">EUR</span>
<div style="left:782.9px;top:418.9px;width:1px;height:20.400000000000034px;background:#d7d7d7;"></div>
<div style="left:782.9px;top:439.3px;width:1px;height:17.30000000000001px;background:#dfe3e8;"></div>
<div style="left:782.9px;top:456.6px;width:1px;height:17.399999999999977px;background:#cad5e6;"></div>
<span class="t" style="right:582.2px;top:422.3px;letter-spacing:-0.1px;">per</span>
<span class="t" style="right:587.0px;top:440.35px;letter-spacing:-0.1px;">1</span>
<span class="t" style="right:587.0px;top:457.65000000000003px;letter-spacing:-0.1px;">1</span>
<div style="left:871.3px;top:418.9px;width:1px;height:20.400000000000034px;background:#d7d7d7;"></div>
<div style="left:871.3px;top:439.3px;width:1px;height:17.30000000000001px;background:#dfe3e8;"></div>
<div style="left:871.3px;top:456.6px;width:1px;height:17.399999999999977px;background:#cad5e6;"></div>
<span class="t" style="left:785.4px;top:422.3px;letter-spacing:-0.1px;">Cost ctr</span>
<span class="t" style="left:784.9px;top:440.35px;letter-spacing:-0.1px;">1000</span>
<span class="t" style="left:784.9px;top:457.65000000000003px;letter-spacing:-0.1px;">1000</span>
<span class="t" style="left:874.8px;top:425.5px;font-family:'Liberation Serif',serif;font-size:8px;font-weight:bold;line-height:10px;">Σ</span>
<div style="left:875.1999999999999px;top:481px;width:3.4px;height:3.4px;background:#707020;"></div>
<div style="left:974.9px;top:418.9px;width:1px;height:20.400000000000034px;background:#d7d7d7;"></div>
<div style="left:974.9px;top:439.3px;width:1px;height:17.30000000000001px;background:#dfe3e8;"></div>
<div style="left:974.9px;top:456.6px;width:1px;height:17.399999999999977px;background:#cad5e6;"></div>
<span class="t" style="right:390.20000000000005px;top:422.3px;letter-spacing:-0.1px;">Amount</span>
<span class="t" style="right:395.0px;top:440.35px;letter-spacing:-0.1px;">75,35</span>
<span class="t" style="right:395.0px;top:457.65000000000003px;letter-spacing:-0.1px;">84,40</span>
<span class="t b" style="right:393.20000000000005px;top:475.6px;letter-spacing:0.45px;font-size:12.4px;">159,75</span>
<div style="left:1046.9px;top:418.9px;width:1px;height:20.400000000000034px;background:#d7d7d7;"></div>
<div style="left:1046.9px;top:439.3px;width:1px;height:17.30000000000001px;background:#dfe3e8;"></div>
<div style="left:1046.9px;top:456.6px;width:1px;height:17.399999999999977px;background:#cad5e6;"></div>
<span class="t" style="left:977.4px;top:422.3px;letter-spacing:-0.1px;">Vendor</span>
<span class="t" style="left:976.9px;top:440.35px;letter-spacing:-0.1px;">1000100299</span>
<span class="t" style="left:976.9px;top:457.65000000000003px;letter-spacing:-0.1px;">1000100299</span>
<div style="left:1085.9px;top:418.9px;width:1px;height:20.400000000000034px;background:#d7d7d7;"></div>
<div style="left:1085.9px;top:439.3px;width:1px;height:17.30000000000001px;background:#dfe3e8;"></div>
<div style="left:1085.9px;top:456.6px;width:1px;height:17.399999999999977px;background:#cad5e6;"></div>
<span class="t" style="left:1047.4px;top:422.3px;width:39px;text-align:center;letter-spacing:-0.1px;">Text</span>
<div style="left:1125.9px;top:418.9px;width:1px;height:20.400000000000034px;background:#d7d7d7;"></div>
<div style="left:1125.9px;top:439.3px;width:1px;height:17.30000000000001px;background:#dfe3e8;"></div>
<div style="left:1125.9px;top:456.6px;width:1px;height:17.399999999999977px;background:#cad5e6;"></div>
<span class="t" style="left:1088.4px;top:422.3px;letter-spacing:-0.1px;">Plnt</span>
<span class="t" style="left:1087.9px;top:440.35px;letter-spacing:-0.1px;">DE01</span>
<span class="t" style="left:1087.9px;top:457.65000000000003px;letter-spacing:-0.1px;">DE01</span>
<div style="left:1165.9px;top:418.9px;width:1px;height:20.400000000000034px;background:#d7d7d7;"></div>
<div style="left:1165.9px;top:439.3px;width:1px;height:17.30000000000001px;background:#dfe3e8;"></div>
<div style="left:1165.9px;top:456.6px;width:1px;height:17.399999999999977px;background:#cad5e6;"></div>
<span class="t" style="left:1128.4px;top:422.3px;letter-spacing:-0.1px;">POrg</span>
<span class="t" style="left:1127.9px;top:440.35px;letter-spacing:-0.1px;">DE01</span>
<span class="t" style="left:1127.9px;top:457.65000000000003px;letter-spacing:-0.1px;">DE01</span>
<div style="left:1198.9px;top:418.9px;width:1px;height:20.400000000000034px;background:#d7d7d7;"></div>
<div style="left:1198.9px;top:439.3px;width:1px;height:17.30000000000001px;background:#dfe3e8;"></div>
<div style="left:1198.9px;top:456.6px;width:1px;height:17.399999999999977px;background:#cad5e6;"></div>
<span class="t" style="left:1168.4px;top:422.3px;letter-spacing:-0.1px;">Pur.</span>
<div style="left:1189.9px;top:431.90000000000003px;width:1px;height:1px;background:#8a8a8a;"></div>
<div style="left:1192.1000000000001px;top:431.90000000000003px;width:1px;height:1px;background:#8a8a8a;"></div>
<div style="left:1194.3000000000002px;top:431.90000000000003px;width:1px;height:1px;background:#8a8a8a;"></div>
<span class="t" style="left:1167.9px;top:440.35px;letter-spacing:-0.1px;">001</span>
<span class="t" style="left:1167.9px;top:457.65000000000003px;letter-spacing:-0.1px;">001</span>
<div style="left:1309px;top:419px;width:1px;height:71px;background:#e8e8e8;"></div>
<div style="left:1313.5px;top:419.5px;width:12.5px;height:22px;background:#b5c0ce;"></div>
<div style="left:1319px;top:428px;width:2px;height:1px;background:#fff;"></div>
<div style="left:1319px;top:430px;width:2px;height:1px;background:#fff;"></div>
<div style="left:1319px;top:432px;width:2px;height:1px;background:#fff;"></div>
<svg style="left:1314.3px;top:459.9px" width="10" height="7.2" viewBox="0 0 10 7.2"><path d="M1.2 5.4 L5 1.7 L8.8 5.4" fill="none" stroke="#5c5c5c" stroke-width="1.95"/></svg>
<svg style="left:1314.3px;top:477.4px" width="10" height="7.2" viewBox="0 0 10 7.2"><path d="M1.2 1.7 L5 5.4 L8.8 1.7" fill="none" stroke="#5c5c5c" stroke-width="1.95"/></svg>
<div style="left:166px;top:490px;width:1164px;height:1px;background:#cdcdcd;"></div>
<div style="left:166px;top:491px;width:1164px;height:1px;background:#cdcdcd;"></div>
<div style="left:166px;top:492px;width:1164px;height:1px;background:#cdcdcd;"></div>
<div style="left:166px;top:493px;width:1164px;height:1px;background:#cdcdcd;"></div>
<div style="left:166px;top:494px;width:1164px;height:1px;background:#cdcdcd;"></div>
<div style="left:166px;top:495px;width:1164px;height:1px;background:#cdcdcd;"></div>
<div style="left:166px;top:496px;width:1164px;height:1px;background:#cdcdcd;"></div>
<div style="left:166px;top:497px;width:1164px;height:1px;background:#b3b3b3;"></div>
<div style="left:166px;top:498px;width:1164px;height:1px;background:#aaaaaa;"></div>
<div style="left:166px;top:499px;width:1164px;height:1px;background:#d2d2d2;"></div>
<div style="left:742.5px;top:494.7px;width:2.2px;height:2.2px;background:#888888;border-radius:1.1px;"></div>
<div style="left:746.45px;top:494.7px;width:2.2px;height:2.2px;background:#888888;border-radius:1.1px;"></div>
<div style="left:750.4px;top:494.7px;width:2.2px;height:2.2px;background:#888888;border-radius:1.1px;"></div>
<div style="left:754.35px;top:494.7px;width:2.2px;height:2.2px;background:#888888;border-radius:1.1px;"></div>
<div style="left:758.3px;top:494.7px;width:2.2px;height:2.2px;background:#888888;border-radius:1.1px;"></div>
<div style="left:167px;top:500px;width:1163px;height:18px;background:#e3e3e3;"></div>
<span class="t" style="left:167px;top:502.1px;width:1164px;text-align:center;">Text</span>
<div style="left:167px;top:518px;width:1163px;height:59px;background:#e9edf0;border-top:3px solid #8a8a8a;border-left:3px solid #8e8e8e;border-bottom:1px solid #8c8c8c;border-right:1px solid #7c7c7c;"></div>
<div style="left:166px;top:518px;width:1164px;height:1px;background:#a2a2a2;"></div>
<span class="m" style="left:176.8px;top:543.6px;color:#4a90cc;">*** WAGNER , 17.03.2022 - 15:05:43 / Walter Wagner ***</span>
<span class="m" style="left:176.8px;top:559.3px;color:#3c3c3c;">Only 8 printer paper Pkg. are allowed.</span>
<div style="left:1311.5px;top:521px;width:17.5px;height:55px;background:#f0f0f0;"></div>
<div style="left:1313.5px;top:521px;width:12.5px;height:20.4px;background:#b5c0ce;"></div>
<div style="left:1318.6px;top:528.0px;width:2.6px;height:1px;background:#fff;"></div>
<div style="left:1318.6px;top:530.2px;width:2.6px;height:1px;background:#fff;"></div>
<div style="left:1318.6px;top:532.4px;width:2.6px;height:1px;background:#fff;"></div>
<svg style="left:1314.8px;top:546.4px" width="10" height="7.2" viewBox="0 0 10 7.2"><path d="M1.2 5.4 L5 1.7 L8.8 5.4" fill="none" stroke="#5c5c5c" stroke-width="1.95"/></svg>
<svg style="left:1314.8px;top:563.4px" width="10" height="7.2" viewBox="0 0 10 7.2"><path d="M1.2 1.7 L5 5.4 L8.8 1.7" fill="none" stroke="#5c5c5c" stroke-width="1.95"/></svg>
<div style="left:167px;top:577px;width:1163px;height:18px;background:#f2f2f2;"></div>
<div style="left:169.5px;top:577.5px;width:42.5px;height:17px;background:#e4e4e4;border:1px solid #cfcfcf;"></div>
<div style="left:215.5px;top:577.5px;width:90px;height:17px;background:#e4e4e4;border:1px solid #cfcfcf;"></div>
<svg style="left:171px;top:579.4px" width="14.6" height="14.6" viewBox="0 0 15 15"><path d="M0.8 0.8 H14.2 V14.2 H3 L0.8 12 Z" fill="#7fb2e2" stroke="#2f73b0" stroke-width="1.4"/><rect x="2.9" y="0.9" width="9.2" height="6.2" fill="#fff"/><path d="M2.9 7.6 H12.1" stroke="#2f73b0" stroke-width="1.2"/><rect x="4.6" y="10.4" width="6.8" height="3.6" fill="#fff"/></svg>
<svg style="left:219.4px;top:579px" width="15" height="15.4" viewBox="0 0 15 15.4"><path d="M1.4 0.8 H7.6 L11.6 4.6 V9 H1.4 Z" fill="#fff" stroke="#777" stroke-width="0.9"/><path d="M7.6 0.8 V4.6 H11.6" fill="none" stroke="#777" stroke-width="0.8"/><path d="M3 3 H6.4 M3 5 H6.4 M3 7 H9" stroke="#aaa" stroke-width="0.8"/><path d="M2.4 14.6 V10 L4 7.2 H6.2 V14.6 Z M8.4 14.6 V7.2 H10.6 L12.2 10 V14.6 Z" fill="#f2f2f2" stroke="#333" stroke-width="1.1" stroke-linejoin="round"/><rect x="6.2" y="9.4" width="2.2" height="2.4" fill="#333"/></svg>
<span class="t" style="left:188.6px;top:581.1px;letter-spacing:-0.3px;">Sa...</span>
<span class="t" style="left:235.2px;top:581.1px;letter-spacing:0.05px;">Get Templ...</span>
<div style="left:167px;top:595px;width:1163px;height:47px;background:#fff;border-top:2px solid #858585;border-left:3px solid #8e8e8e;border-right:1px solid #7c7c7c;"></div>
<div style="left:176px;top:598px;width:9px;height:15px;background:#0a78d7;"></div>
<div style="left:166px;top:640px;width:1164px;height:1px;background:#9a9a9a;"></div>
<div style="left:166px;top:641px;width:1164px;height:1px;background:#8c8c8c;"></div>
<div style="left:166px;top:642px;width:1164px;height:1px;background:#cdcdcd;"></div>
<div style="left:166px;top:643px;width:1164px;height:1px;background:#cdcdcd;"></div>
<div style="left:166px;top:644px;width:1164px;height:1px;background:#cdcdcd;"></div>
<div style="left:166px;top:645px;width:1164px;height:1px;background:#cdcdcd;"></div>
<div style="left:166px;top:646px;width:1164px;height:1px;background:#cdcdcd;"></div>
<div style="left:166px;top:647px;width:1164px;height:1px;background:#cdcdcd;"></div>
<div style="left:166px;top:648px;width:1164px;height:1px;background:#aeaeae;"></div>
<div style="left:166px;top:649px;width:1164px;height:1px;background:#bcbcbc;"></div>
<div style="left:742.5px;top:645.3000000000001px;width:2.2px;height:2.2px;background:#888888;border-radius:1.1px;"></div>
<div style="left:746.45px;top:645.3000000000001px;width:2.2px;height:2.2px;background:#888888;border-radius:1.1px;"></div>
<div style="left:750.4px;top:645.3000000000001px;width:2.2px;height:2.2px;background:#888888;border-radius:1.1px;"></div>
<div style="left:754.35px;top:645.3000000000001px;width:2.2px;height:2.2px;background:#888888;border-radius:1.1px;"></div>
<div style="left:758.3px;top:645.3000000000001px;width:2.2px;height:2.2px;background:#888888;border-radius:1.1px;"></div>
<div style="left:167px;top:650px;width:1163px;height:18px;background:#e3e3e3;"></div>
<span class="t" style="left:167px;top:653px;width:1164px;text-align:center;">xSuite Log</span>
<div style="left:166px;top:668px;width:1164px;height:1px;background:#d8d8d8;"></div>
<div style="left:166px;top:669px;width:1164px;height:1px;background:#d0d0d0;"></div>
<div style="left:833.5px;top:670px;width:495.5px;height:21px;background:#f3f3f3;border-top:1px solid #e9e9e9;border-bottom:1px solid #e6e6e6;"></div>
<div style="left:169px;top:670px;width:21px;height:21px;background:#e6e6e6;border-bottom:1px solid #d4d4d4;border-right:1px solid #d9d9d9;"></div>
<svg style="left:174.1px;top:674.6px" width="13" height="12" viewBox="0 0 13 12"><rect x="0.6" y="0.6" width="9" height="9.6" rx="0.8" fill="#3b405e" stroke="#3b405e" stroke-width="1.2"/><rect x="1" y="1" width="8.2" height="2.1" fill="#fff"/><rect x="1" y="4.7" width="6" height="1.7" fill="#c9c9c9"/><rect x="1" y="7.5" width="6" height="1.7" fill="#fff"/><path d="M6.6 4.2 L12 8 L9.3 8.6 L7.8 11.4 Z" fill="#fff"/><circle cx="11.6" cy="8" r="0.7" fill="#3b405e"/></svg>
<div style="left:169px;top:691px;width:21px;height:14.4px;background:#e8e8e8;"></div>
<div style="left:192px;top:670px;width:641.5px;height:21px;background:#e7e7e7;"></div>
<div style="left:192px;top:691px;width:641.5px;height:14.4px;background:#d5dff0;"></div>
<div style="left:264px;top:671px;width:1px;height:20px;background:#d8d8d8;"></div>
<div style="left:264px;top:691px;width:1px;height:14px;background:#cbd6e6;"></div>
<span class="t" style="left:193.2px;top:675.2px;letter-spacing:-0.2px;">User account</span>
<span class="t" style="left:193.2px;top:693.2px;letter-spacing:-0.8px;">WAGNER</span>
<div style="left:376px;top:671px;width:1px;height:20px;background:#d8d8d8;"></div>
<div style="left:376px;top:691px;width:1px;height:14px;background:#cbd6e6;"></div>
<span class="t" style="left:266.2px;top:675.2px;">First name</span>
<span class="t" style="left:266.2px;top:693.2px;">Walter</span>
<div style="left:477px;top:671px;width:1px;height:20px;background:#d8d8d8;"></div>
<div style="left:477px;top:691px;width:1px;height:14px;background:#cbd6e6;"></div>
<span class="t" style="left:378.2px;top:675.2px;">Last name</span>
<span class="t" style="left:378.2px;top:693.2px;">Wagner</span>
<div style="left:683.7px;top:671px;width:1px;height:20px;background:#d8d8d8;"></div>
<div style="left:683.7px;top:691px;width:1px;height:14px;background:#cbd6e6;"></div>
<span class="t" style="left:479.2px;top:675.2px;">Log text</span>
<span class="t" style="left:479.2px;top:693.2px;">PR - edit document completed</span>
<div style="left:764.5px;top:671px;width:1px;height:20px;background:#d8d8d8;"></div>
<div style="left:764.5px;top:691px;width:1px;height:14px;background:#cbd6e6;"></div>
<span class="t" style="left:685.9000000000001px;top:675.2px;">Date</span>
<span class="t" style="left:685.9000000000001px;top:693.2px;">17.03.2022</span>
<div style="left:832.5px;top:671px;width:1px;height:20px;background:#d8d8d8;"></div>
<div style="left:832.5px;top:691px;width:1px;height:14px;background:#cbd6e6;"></div>
<span class="t" style="left:766.7px;top:675.2px;">Time</span>
<span class="t" style="left:766.7px;top:693.2px;">15:19:57</span>
<div style="left:1309px;top:670px;width:1px;height:35px;background:#e6e6e6;"></div>
<svg style="left:1314.5px;top:675.4px" width="10" height="7.2" viewBox="0 0 10 7.2"><path d="M1.2 5.4 L5 1.7 L8.8 5.4" fill="none" stroke="#5c5c5c" stroke-width="1.95"/></svg>
<svg style="left:1314.5px;top:692.4px" width="10" height="7.2" viewBox="0 0 10 7.2"><path d="M1.2 1.7 L5 5.4 L8.8 1.7" fill="none" stroke="#5c5c5c" stroke-width="1.95"/></svg>
<div style="left:166px;top:705px;width:1164px;height:1px;background:#cdcdcd;"></div>
<div style="left:166px;top:706px;width:1164px;height:1px;background:#cdcdcd;"></div>
<div style="left:166px;top:707px;width:1164px;height:1px;background:#cdcdcd;"></div>
<div style="left:166px;top:708px;width:1164px;height:1px;background:#cdcdcd;"></div>
<div style="left:166px;top:709px;width:1164px;height:1px;background:#cdcdcd;"></div>
<div style="left:166px;top:710px;width:1164px;height:1px;background:#cdcdcd;"></div>
<div style="left:166px;top:711px;width:1164px;height:1px;background:#cdcdcd;"></div>
<div style="left:166px;top:712px;width:1164px;height:1px;background:#a0a0a0;"></div>
<div style="left:166px;top:713px;width:1164px;height:1px;background:#bdbdbd;"></div>
<div style="left:742.5px;top:709.2px;width:2.2px;height:2.2px;background:#888888;border-radius:1.1px;"></div>
<div style="left:746.45px;top:709.2px;width:2.2px;height:2.2px;background:#888888;border-radius:1.1px;"></div>
<div style="left:750.4px;top:709.2px;width:2.2px;height:2.2px;background:#888888;border-radius:1.1px;"></div>
<div style="left:754.35px;top:709.2px;width:2.2px;height:2.2px;background:#888888;border-radius:1.1px;"></div>
<div style="left:758.3px;top:709.2px;width:2.2px;height:2.2px;background:#888888;border-radius:1.1px;"></div>
<div style="left:25px;top:726px;width:1320px;height:1px;background:#d6d6d6;"></div>
<div style="left:25px;top:727px;width:1320px;height:1px;background:#dedede;"></div>
<div style="left:20px;top:733px;width:1325px;height:2px;background:linear-gradient(#cfcfcf,#d9d9d9);"></div>
<svg style="left:662px;top:737.6px" width="39" height="19" viewBox="0 0 39 19"><defs><linearGradient id="sapg" x1="0" y1="0" x2="0" y2="1"><stop offset="0" stop-color="#0cb0ee"/><stop offset="0.5" stop-color="#1c86d8"/><stop offset="1" stop-color="#1a4fb2"/></linearGradient></defs><path d="M0 0 H38.8 L20.6 18.8 H0 Z" fill="url(#sapg)"/><text x="0.8" y="15.2" font-family="Liberation Sans,sans-serif" font-size="15.4" font-weight="bold" font-style="italic" fill="#fff" stroke="#fff" stroke-width="0.5" textLength="26.6" lengthAdjust="spacingAndGlyphs">SAP</text></svg>
<svg style="left:1336px;top:743px" width="10" height="9" viewBox="0 0 10 9"><path d="M4.2 0.8 L1.2 4.2 L4.2 7.6 M8.6 0.8 L5.6 4.2 L8.6 7.6" fill="none" stroke="#5a5a5a" stroke-width="1.2"/></svg>
<svg style="left:1347px;top:750px" width="16" height="15" viewBox="0 0 16 15"><path d="M14.5 1 L1.5 13.5 M14.5 6 L6.5 13.5 M14.5 10.5 L11.5 13.5" stroke="#c4c4c4" stroke-width="1.2" fill="none"/></svg>
<div style="left:166px;top:81px;width:2px;height:646px;background:linear-gradient(90deg,#8e8e8e,#a2a2a2);"></div>
</body></html>
